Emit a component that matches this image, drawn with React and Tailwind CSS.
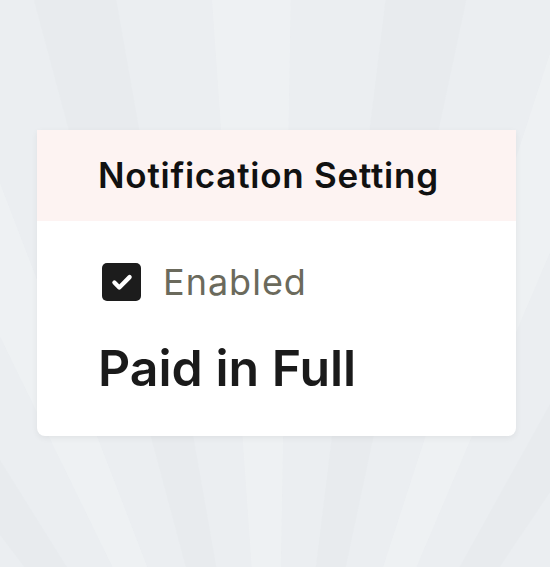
import React from 'react'

function Rays() {
  // faint radiating bands behind the card
  const bands = []
  for (let i = 0; i < 14; i++) {
    const a = -70 + i * 11
    bands.push(
      <path
        key={i}
        d={`M 275 900 L ${275 + 1400 * Math.sin((a * Math.PI) / 180)} ${900 - 1400 * Math.cos((a * Math.PI) / 180)} L ${275 + 1400 * Math.sin(((a + 5) * Math.PI) / 180)} ${900 - 1400 * Math.cos(((a + 5) * Math.PI) / 180)} Z`}
        fill={i % 2 ? '#e6e9ec' : '#f0f3f5'}
        opacity="0.6"
      />
    )
  }
  return (
    <svg className="absolute inset-0" width="550" height="567" viewBox="0 0 550 567">
      {bands}
    </svg>
  )
}

export default function App() {
  return (
    <div className="relative w-[550px] h-[567px] overflow-hidden bg-[#ebeef1] font-['Inter',sans-serif]">
      <Rays />
      <div className="relative pt-[130px] pl-[37px]">
        <div className="w-[479px] bg-white rounded-b-lg shadow-[0_2px_6px_rgba(0,0,0,0.06)]">
          <div className="h-[91px] bg-[#fdf3f2] pl-[61px] flex items-center">
            <h2 className="text-[35px] font-semibold text-[#111] tracking-[0.75px]">Notification Setting</h2>
          </div>
          <div className="pl-[65px] pt-[42px] pb-[43px]">
            <label className="flex items-center gap-[22px]">
              <span className="w-[39px] h-[38px] rounded-[5px] bg-[#1c1c1c] flex items-center justify-center">
                <svg width="26" height="26" viewBox="0 0 24 24" fill="none" stroke="white" strokeWidth="4" strokeLinecap="round" strokeLinejoin="round">
                  <path d="M5 12.5l4.5 4.5L19 7.5" />
                </svg>
              </span>
              <span className="text-[36px] text-[#6b6a5c] leading-none tracking-[1px]">Enabled</span>
            </label>
            <p className="-ml-[4px] mt-[42px] text-[50px] font-semibold text-[#1a1a1a] leading-none">Paid in Full</p>
          </div>
        </div>
      </div>
    </div>
  )
}
